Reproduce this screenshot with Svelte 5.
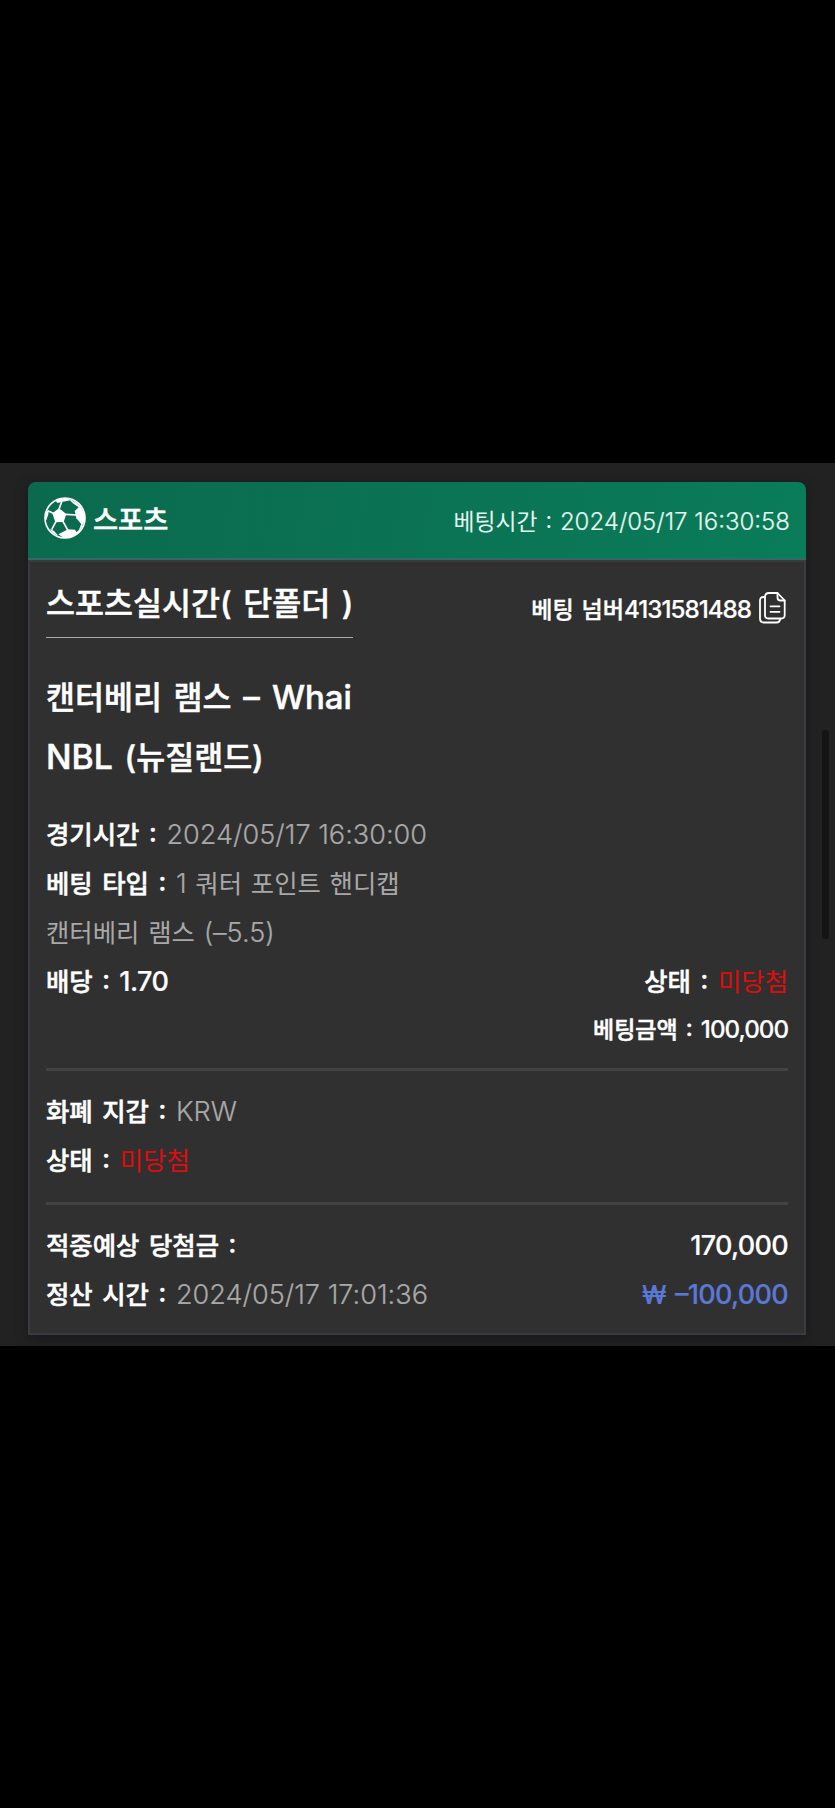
<!-- BetReceipt -->
<script lang="ts">
    type Row = {
        label: string;
        value: string;
        tone: 'muted' | 'muted num' | 'lost';
    };

    const bet = {
        category: '스포츠',
        placedAt: '2024/05/17 16:30:58',
        kind: '스포츠실시간( 단폴더 )',
        number: '4131581488',
        match: '캔터베리 램스',
        opponent: 'Whai',
        league: 'NBL',
        country: '(뉴질랜드)',
        odds: '1.70',
        stake: '100,000',
        expected: '170,000',
        settledAt: '2024/05/17 17:01:36',
        result: '–100,000'
    };

    const wallet: Row[] = [
        { label: '화폐 지갑', value: 'KRW', tone: 'muted num' },
        { label: '상태', value: '미당첨', tone: 'lost' }
    ];
</script>

<div class="page">
    <main class="panel">
        <div class="scrollbar"></div>
        <article class="card">
            <header class="card-header">
                <div class="category">
                    <svg class="ball" viewBox="0 0 126 126">
                        <circle cx="63" cy="63" r="60" fill="none" stroke="#fff" stroke-width="5" />
                        <g fill="#fff">
                            <path d="M25 49 45 34 67 51 59 75 34 76Z" />
                            <path d="M92 42 108 27Q121 43 123 63Q121 76 115 85L97 64Z" />
                            <path d="M34 10Q49 1 65 4L85 9 56 14 40 18Z" />
                            <path d="M58 105 71 97 93 98 100 109Q82 124 60 123L43 112Z" />
                            <path d="M4 48 14 38 13 52 8 67 3 72Z" />
                            <path d="M17 95 30 102 43 116Q24 109 17 95Z" />
                            <path d="M83 8Q101 14 110 32L99 22Z" />
                        </g>
                        <g fill="none" stroke="#fff" stroke-width="5">
                            <path d="M45 37 54 11M65 52 97 54M57 73 71 99M36 73 23 98M28 49 11 41M80 9 90 18 109 31M114 82 107 100 98 108M48 113 62 105" />
                        </g>
                    </svg>
                    <span>{bet.category}</span>
                </div>
                <div class="placed">베팅시간 : <span class="num">{bet.placedAt}</span></div>
            </header>

            <div class="card-body">
                <div class="title-row">
                    <h1>{bet.kind}</h1>
                    <div class="number">
                        <span>베팅 넘버<span class="num">{bet.number}</span></span>
                        <svg class="copy" viewBox="0 0 27 32" fill="none" stroke="#fff" stroke-width="1.8" stroke-linejoin="round" stroke-linecap="round">
                            <path d="M10 1H18.5L25.7 8.5V23Q25.7 26.5 22.2 26.5H9.5Q6 26.5 6 23V5Q6 1 10 1Z" />
                            <path d="M18.5 1V5.5Q18.5 8.5 21.5 8.5H25.7" />
                            <path d="M6 5H4.5Q1 5 1 8.5V26.5Q1 30.5 5 30.5H17.5Q20.7 30.5 21.2 27" />
                            <path d="M11.5 14.3H20.5M11.5 19.8H20.5" />
                        </svg>
                    </div>
                </div>

                <h2 class="match">{bet.match} <span class="latin">– {bet.opponent}</span></h2>
                <h2><span class="latin league">{bet.league}</span> {bet.country}</h2>

                <section class="details">
                    <div class="row">
                        <p><b>경기시간 :</b> <span class="muted num">2024/05/17 16:30:00</span></p>
                    </div>
                    <div class="row">
                        <p><b>베팅 타입 :</b> <span class="muted"><span class="num">1</span> 쿼터 포인트 핸디캡</span></p>
                    </div>
                    <div class="row">
                        <p class="muted">캔터베리 램스 <span class="num">(–5.5)</span></p>
                    </div>
                    <div class="row">
                        <p><b>배당 : <span class="num odds">{bet.odds}</span></b></p>
                        <p><b>상태 :</b> <span class="lost">미당첨</span></p>
                    </div>
                    <div class="row stake">
                        <b>베팅금액 : <span class="num">{bet.stake}</span></b>
                    </div>
                </section>

                <section class="wallet">
                    {#each wallet as row}
                        <div class="row">
                            <p><b>{row.label} :</b> <span class={row.tone}>{row.value}</span></p>
                        </div>
                    {/each}
                </section>

                <section class="totals">
                    <div class="row">
                        <p><b>적중예상 당첨금 :</b></p>
                        <b class="amount">{bet.expected}</b>
                    </div>
                    <div class="row">
                        <p><b>정산 시간 :</b> <span class="muted num">{bet.settledAt}</span></p>
                        <b class="amount result"><span class="won">₩</span> {bet.result}</b>
                    </div>
                </section>
            </div>
        </article>
    </main>
</div>

<style>
:global(body) {
    background: #000;
}

.page {
    box-sizing: border-box;
    height: 1808px;
    padding-top: 463px;
    background: #000;
    color: #fff;
    font-family: Inter, "Noto Sans CJK KR", sans-serif;
    font-size: 25.4px;
    word-spacing: 2.7px;
}

.panel {
    position: relative;
    box-sizing: border-box;
    height: 883px;
    padding: 19px 29px 0 28px;
    background: #222;
    overflow: hidden;
}

.scrollbar {
    position: absolute;
    top: 267px;
    right: 6px;
    width: 7px;
    height: 209px;
    border-radius: 4px;
    background: #141414;
}

.card {
    border-radius: 8px 8px 0 0;
    box-shadow: 0 3px 12px #17181b;
}

.card-header {
    display: flex;
    justify-content: space-between;
    align-items: center;
    box-sizing: border-box;
    height: 78px;
    padding: 0 16px;
    border-bottom: 2px solid #2f6a63;
    border-radius: 8px 8px 0 0;
    background: linear-gradient(100deg, #0b6a4d, #0a7c59);
}

.category {
    display: flex;
    align-items: center;
    gap: 7px;
    margin-top: -4px;
    font-size: 27.3px;
    font-weight: 500;
    -webkit-text-stroke: 0.5px currentColor;
}

.ball {
    width: 42px;
    height: 42px;
}

.placed {
    color: #e6f5ef;
    font-size: 22.8px;
    font-weight: 400;
    word-spacing: 1.5px;
    font-feature-settings: "case";
}

.placed .num {
    font-size: 24px;
    font-weight: 300;
    word-spacing: 0;
    -webkit-text-stroke: 0.2px currentColor;
}

.card-body {
    box-sizing: border-box;
    height: 775px;
    padding: 0 16px;
    border: 2px solid #3b3b3f;
    background: #303030;
}

.title-row {
    display: flex;
    justify-content: space-between;
    height: 77px;
}

h1, h2, p {
    margin: 0;
}

h1, h2 {
    font-size: 31.5px;
    font-weight: 500;
    word-spacing: 3.3px;
    -webkit-text-stroke: 0.5px currentColor;
}

h1 {
    padding-top: 12px;
    height: 63px;
    line-height: 60px;
    border-bottom: 1px solid #aaa;
}

h2 {
    height: 59px;
    line-height: 59px;
}

.match {
    margin-top: 29px;
}

.latin {
    font-size: 33px;
    font-weight: 500;
}

.league {
    font-size: 33.8px;
}

.number {
    display: flex;
    align-items: center;
    gap: 8px;
    height: 92px;
    font-size: 23.1px;
    font-weight: 500;
    word-spacing: 1.5px;
    -webkit-text-stroke: 0.4px currentColor;
}

.number .num {
    font-size: 24.2px;
    letter-spacing: -1px;
}

.copy {
    width: 27px;
    height: 32px;
    margin-right: 2px;
}

.row {
    display: flex;
    justify-content: space-between;
    height: 49px;
    line-height: 49px;
    white-space: nowrap;
}

b {
    font-weight: 500;
    font-feature-settings: "case";
    -webkit-text-stroke: 0.5px currentColor;
}

.details {
    padding: 24px 0 15px;
}

.wallet, .totals {
    border-top: 3px solid #434343;
}

.wallet {
    padding: 16px 0 17px;
}

.totals {
    padding-top: 16px;
}

.stake {
    justify-content: flex-end;
    height: 47px;
    line-height: 47px;
    font-size: 23px;
    word-spacing: 2px;
}

.stake .num {
    font-size: 24.2px;
    letter-spacing: -1px;
}

.muted {
    color: #a8a8a8;
    font-weight: 400;
    word-spacing: 1.6px;
}

.muted.num, .muted .num {
    font-size: 27.1px;
    font-weight: 300;
    word-spacing: 0;
    -webkit-text-stroke: 0.2px currentColor;
}

.odds {
    font-size: 27px;
    letter-spacing: -0.6px;
}

.lost {
    color: #e00b0b;
    font-weight: 400;
}

.num, .amount {
    -webkit-text-stroke: 0.2px currentColor;
}

.amount {
    font-size: 27px;
    letter-spacing: -0.7px;
}

.result {
    color: #5b78d6;
}

.won {
    font-size: 25px;
}
</style>
